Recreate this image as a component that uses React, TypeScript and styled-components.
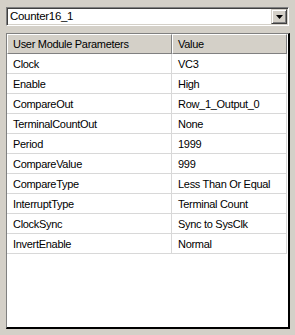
import styled, { createGlobalStyle } from "styled-components";

const rows: [string, string][] = [
  ["Clock", "VC3"],
  ["Enable", "High"],
  ["CompareOut", "Row_1_Output_0"],
  ["TerminalCountOut", "None"],
  ["Period", "1999"],
  ["CompareValue", "999"],
  ["CompareType", "Less Than Or Equal"],
  ["InterruptType", "Terminal Count"],
  ["ClockSync", "Sync to SysClk"],
  ["InvertEnable", "Normal"],
];

function App() {
  return (
    <>
      <Global />
      <Window>
        <Combo>
          <ComboText>Counter16_1</ComboText>
          <DropButton>
            <svg width="7" height="4" viewBox="0 0 7 4">
              <path d="M0 0h7L3.5 4z" fill="#000" />
            </svg>
          </DropButton>
        </Combo>
        <Panel>
          <Grid>
            <HeadCell>User Module Parameters</HeadCell>
            <HeadCell>Value</HeadCell>
            {rows.map(([name, value]) => (
              <Row key={name}>
                <Cell>{name}</Cell>
                <Cell>{value}</Cell>
              </Row>
            ))}
          </Grid>
        </Panel>
      </Window>
    </>
  );
}

// STYLING
const Global = createGlobalStyle`
  html, body {
    margin: 0;
    padding: 0;
    background: #d4d0c8;
  }
`;

const Window = styled.div`
  width: 295px;
  height: 335px;
  box-sizing: border-box;
  padding: 7px 5px 6px 6px;
  display: flex;
  flex-direction: column;
  gap: 7px;
  background: #d4d0c8;
  font-family: Tahoma, "Liberation Sans", Arial, sans-serif;
  font-size: 11px;
  letter-spacing: -0.3px;
  color: #000;
`;

const Combo = styled.div`
  height: 19px;
  box-sizing: border-box;
  margin-right: 1px;
  display: flex;
  align-items: center;
  justify-content: space-between;
  background: #fff;
  border-top: 1px solid #808080;
  border-left: 1px solid #808080;
  border-bottom: 1px solid #fff;
  border-right: 1px solid #fff;
  box-shadow: inset 1px 1px 0 #404040, inset -1px -1px 0 #d4d0c8;
  padding: 0 1px 0 3px;
`;

const ComboText = styled.span`
  line-height: 15px;
  font-size: 11.5px;
`;

const DropButton = styled.div`
  width: 16px;
  height: 15px;
  box-sizing: border-box;
  display: flex;
  align-items: center;
  justify-content: center;
  background: #d4d0c8;
  border-top: 1px solid #d4d0c8;
  border-left: 1px solid #d4d0c8;
  border-bottom: 1px solid #404040;
  border-right: 1px solid #404040;
  box-shadow: inset 1px 1px 0 #fff, inset -1px -1px 0 #808080;
`;

const Panel = styled.div`
  flex: 1;
  background: #fff;
  border-top: 1px solid #808080;
  border-left: 1px solid #808080;
  border-bottom: 2px solid #000;
  border-right: 2px solid #000;
  padding-right: 1px;
`;

const Grid = styled.div`
  display: grid;
  grid-template-columns: 165px 1fr;
`;

const HeadCell = styled.div`
  height: 20px;
  box-sizing: border-box;
  display: flex;
  align-items: center;
  padding-left: 5px;
  background: #d4d0c8;
  border-top: 1px solid #fff;
  border-left: 1px solid #fff;
  border-bottom: 1px solid #808080;
  border-right: 1px solid #808080;
`;

const Row = styled.div`
  display: contents;
`;

const Cell = styled.div`
  height: 20px;
  box-sizing: border-box;
  display: flex;
  align-items: center;
  padding-left: 6px;
  border-bottom: 1px solid #d8d8d8;
  border-right: 1px solid #d8d8d8;
`;

export default App;
